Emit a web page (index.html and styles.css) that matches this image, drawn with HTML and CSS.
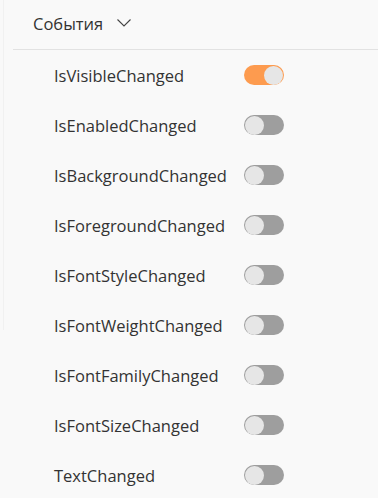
FILE: index.html
```html
<!DOCTYPE html>
<html lang="ru">
<head>
<meta charset="utf-8">
<link rel="stylesheet" href="styles.css">
</head>
<body>
<div class="panel">
  <div class="header">
    <span class="title">События</span>
    <svg class="chevron" width="14" height="8" viewBox="0 0 14 8"><path d="M0.5 0.5 L7 7 L13.5 0.5" fill="none" stroke="#444" stroke-width="1.1"/></svg>
  </div>
  <ul class="list">
    <li class="row"><span class="label">IsVisibleChanged</span><span class="toggle on"><span class="thumb"></span></span></li>
    <li class="row"><span class="label">IsEnabledChanged</span><span class="toggle"><span class="thumb"></span></span></li>
    <li class="row"><span class="label">IsBackgroundChanged</span><span class="toggle"><span class="thumb"></span></span></li>
    <li class="row"><span class="label">IsForegroundChanged</span><span class="toggle"><span class="thumb"></span></span></li>
    <li class="row"><span class="label">IsFontStyleChanged</span><span class="toggle"><span class="thumb"></span></span></li>
    <li class="row"><span class="label">IsFontWeightChanged</span><span class="toggle"><span class="thumb"></span></span></li>
    <li class="row"><span class="label">IsFontFamilyChanged</span><span class="toggle"><span class="thumb"></span></span></li>
    <li class="row"><span class="label">IsFontSizeChanged</span><span class="toggle"><span class="thumb"></span></span></li>
    <li class="row"><span class="label">TextChanged</span><span class="toggle"><span class="thumb"></span></span></li>
  </ul>
</div>
</body>
</html>
```
FILE: styles.css
```css
html, body {
  margin: 0;
  padding: 0;
  background: #f9f9f9;
}
body {
  font-family: "Open Sans", "Noto Sans", sans-serif;
  color: #333;
  width: 378px;
  height: 498px;
  overflow: hidden;
  position: relative;
}
body::before {
  content: "";
  position: absolute;
  left: 3px;
  top: 0;
  width: 1px;
  height: 330px;
  background: #f1f1f1;
}
.panel {
  display: flex;
  flex-direction: column;
}
.header {
  height: 49px;
  margin-left: 13px;
  padding-left: 20px;
  border-bottom: 1px solid #e2e2e2;
  display: flex;
  align-items: center;
  gap: 14px;
  box-sizing: content-box;
}
.title {
  font-size: 16.5px;
  position: relative;
  top: -1px;
}
.chevron {
  display: block;
  margin-top: -4px;
}
.list {
  list-style: none;
  margin: 0;
  padding: 0;
}
.row {
  height: 50px;
  display: flex;
  align-items: center;
  padding-left: 54px;
}
.label {
  width: 190px;
  font-size: 16.5px;
}
.toggle {
  width: 40px;
  height: 20px;
  border-radius: 10px;
  background: #9e9e9e;
  display: flex;
  align-items: center;
  padding: 0 1px;
  box-sizing: border-box;
}
.toggle.on {
  background: #fd9b4f;
  justify-content: flex-end;
}
.thumb {
  width: 19px;
  height: 19px;
  border-radius: 50%;
  background: #e6e6e6;
}
```
